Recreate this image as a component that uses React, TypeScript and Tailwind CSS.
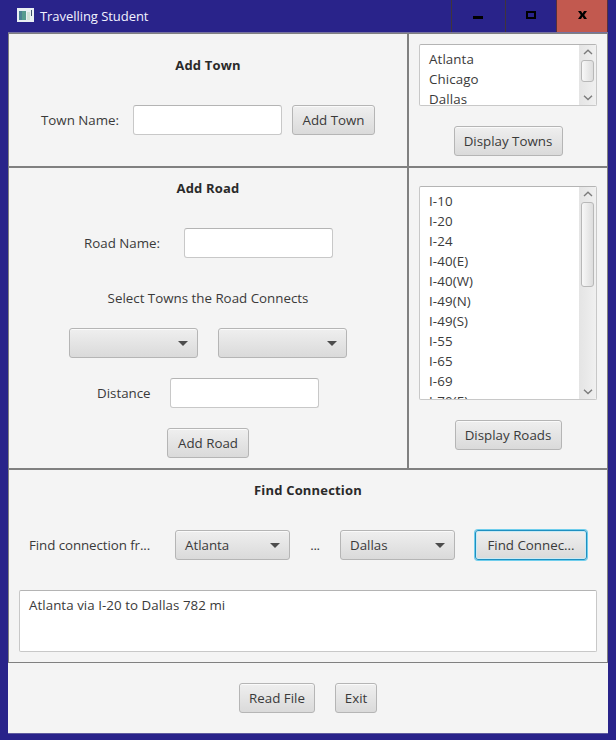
import type { ReactNode } from "react";

const FACE =
  "rounded-[3px] border border-[#b5b5b5] bg-linear-to-b from-[#efefef] to-[#dadada] shadow-[inset_0_1px_0_#fafafa]";

function Button({ className, children }: { className: string; children: ReactNode }) {
  return (
    <button className={`flex h-[30px] shrink-0 items-center justify-center pt-px whitespace-nowrap ${FACE} ${className}`}>
      {children}
    </button>
  );
}

function Field({ className = "" }: { className?: string }) {
  return (
    <input
      className={`h-[30px] w-[149px] shrink-0 rounded-[3px] border border-[#c8c8c8] border-t-[#b4b4b4] bg-white outline-none ${className}`}
    />
  );
}

function Combo({ className, value = "" }: { className: string; value?: string }) {
  return (
    <div className={`flex h-[30px] shrink-0 items-center justify-between pr-[9px] pl-[9px] ${FACE} ${className}`}>
      <span className="pt-px">{value}</span>
      <svg width="10" height="5" viewBox="0 0 10 5" className="mt-px">
        <path d="M0 0H10L5 5Z" fill="#4c4c4c" />
      </svg>
    </div>
  );
}

function Chevron({ down = false }: { down?: boolean }) {
  return (
    <svg width="10" height="6" viewBox="0 0 10 6" className="shrink-0">
      <path d={down ? "M1 0.8L5 4.6L9 0.8" : "M1 5L5 1.2L9 5"} fill="none" stroke="#7c7c7c" strokeWidth="1.4" />
    </svg>
  );
}

function ListBox({ items, className, thumb }: { items: string[]; className: string; thumb: string }) {
  return (
    <div
      className={`flex w-[178px] shrink-0 overflow-hidden rounded-[2px] border border-[#c8c8c8] border-t-[#b4b4b4] bg-white ${className}`}
    >
      <ul className="h-full flex-1 overflow-hidden pt-1 pl-[9px] tracking-[0.1px]">
        {items.map((item) => (
          <li key={item} className="h-5 leading-5">
            {item}
          </li>
        ))}
      </ul>
      <div className="flex w-[17px] flex-col items-center bg-linear-to-r from-[#e4e4e4] to-[#f0f0f0] pt-1 pb-1">
        <Chevron />
        <div
          className={`mt-[5px] w-[13px] shrink-0 rounded-[3px] border border-[#b8b8b8] bg-linear-to-r from-[#f8f8f8] to-[#dddddd] ${thumb}`}
        />
        <div className="flex-1" />
        <Chevron down />
      </div>
    </div>
  );
}

function Title({ children }: { children: ReactNode }) {
  return <h2 className="h-5 text-center text-[13px] leading-5 font-bold tracking-[0.18px] text-[#2a2a2a]">{children}</h2>;
}

const PANEL = "border border-[#808080]";
const TOWNS = ["Atlanta", "Chicago", "Dallas"];
const ROADS = ["I-10", "I-20", "I-24", "I-40(E)", "I-40(W)", "I-49(N)", "I-49(S)", "I-55", "I-65", "I-69", "I-70(E)"];

export default function App() {
  return (
    <div className="flex h-[740px] w-[616px] flex-col overflow-hidden bg-[#29238a] font-['Open_Sans','Noto_Sans',sans-serif] text-[13.33px] text-[#3a3a3a]">
      <header className="flex h-[33px] shrink-0 pr-2 pl-[17px]">
        <svg width="17" height="15" viewBox="0 0 17 15" className="mt-2 shrink-0">
          <rect width="17" height="14" fill="#e9eff3" />
          <rect x="2" y="3" width="7" height="9" fill="#579b8f" />
          <rect x="2" y="3" width="3" height="9" fill="#4b8293" />
          <path d="M10 5H13M10 7H13M10 9H13M10 11H13" stroke="#bbd6bd" />
          <path d="M14.5 2V8" stroke="#41536e" />
        </svg>
        <h1 className="mt-[6px] ml-[6px] flex-1 text-[13px] leading-5 tracking-[-0.05px] text-[#f2f2ff]">Travelling Student</h1>
        <div className="flex h-[33px] border-b border-[#40343c]">
          <div className="w-[54px] border-l border-[#40343c]">
            <div className="mt-4 ml-[21px] h-[3px] w-[10px] bg-black" />
          </div>
          <div className="w-[51px] border-l border-[#40343c]">
            <div className="mt-[11px] ml-[20px] h-2 w-[10px] border-2 border-black" />
          </div>
          <div className="w-[52px] border-x border-[#54303c] bg-[#c2594f]">
            <svg width="9" height="8" viewBox="0 0 9 8" className="mt-[11px] ml-[21px]">
              <path d="M0 0H3L4.5 2.4L6 0H9L6.2 4L9 8H6L4.5 5.6L3 8H0L2.8 4Z" fill="#000" />
            </svg>
          </div>
        </div>
      </header>

      <main className="mx-2 flex h-[700px] flex-col bg-[#f4f4f4] shadow-[0_-1px_0_#77739f,0_1px_0_#5f5b9f]">
        <div className="flex h-[134px]">
          <section className={`w-[400px] pt-[21px] ${PANEL}`}>
            <Title>Add Town</Title>
            <div className="mt-[30px] flex items-center pl-8">
              <label className="w-[92px] pt-px">Town Name:</label>
              <Field />
              <Button className="ml-[10px] w-[83px]">Add Town</Button>
            </div>
          </section>
          <section className={`flex w-[200px] flex-col items-center pt-[10px] ${PANEL}`}>
            <ListBox items={TOWNS} className="h-[62px]" thumb="h-[22px]" />
            <Button className="mt-5 w-[109px]">Display Towns</Button>
          </section>
        </div>

        <div className="flex h-[302px]">
          <section className={`flex w-[400px] flex-col pt-[10px] ${PANEL}`}>
            <Title>Add Road</Title>
            <div className="mt-[30px] flex items-center pl-[75px]">
              <label className="w-[100px] pt-px">Road Name:</label>
              <Field />
            </div>
            <p className="mt-[30px] h-5 text-center leading-5">Select Towns the Road Connects</p>
            <div className="mt-5 flex gap-5 pl-[60px]">
              <Combo className="w-[129px]" />
              <Combo className="w-[129px]" />
            </div>
            <div className="mt-5 flex items-center pl-[88px]">
              <label className="w-[73px] pt-px">Distance</label>
              <Field />
            </div>
            <Button className="mt-5 w-[82px] self-center">Add Road</Button>
          </section>
          <section className={`flex w-[200px] flex-col items-center pt-[18px] ${PANEL}`}>
            <ListBox items={ROADS} className="h-[214px]" thumb="h-[85px]" />
            <Button className="mt-5 w-[107px]">Display Roads</Button>
          </section>
        </div>

        <section className={`h-[194px] pt-[10px] ${PANEL}`}>
          <Title>Find Connection</Title>
          <div className="mt-[30px] flex items-center pl-5">
            <label className="w-[146px] pt-px tracking-[-0.08px]">Find connection fr...</label>
            <Combo className="w-[115px]" value="Atlanta" />
            <span className="w-[50px] pt-px text-center tracking-[-0.3px]">...</span>
            <Combo className="w-[115px]" value="Dallas" />
            <Button className="ml-5 w-[112px] border-[#1e8fc0]! shadow-[0_0_0_1px_#6fcdec,inset_0_0_0_1px_#c9eaf5]!">Find Connec...</Button>
          </div>
          <div className="mx-[10px] mt-[30px] h-[62px] rounded-[2px] border border-[#c8c8c8] border-t-[#b4b4b4] bg-white pt-1 pl-[9px] leading-5 tracking-[0.05px]">
            Atlanta via I-20 to Dallas 782 mi
          </div>
        </section>

        <footer className="flex h-[70px] items-center justify-center gap-5">
          <Button className="w-[76px]">Read File</Button>
          <Button className="w-[42px]">Exit</Button>
        </footer>
      </main>
    </div>
  );
}
